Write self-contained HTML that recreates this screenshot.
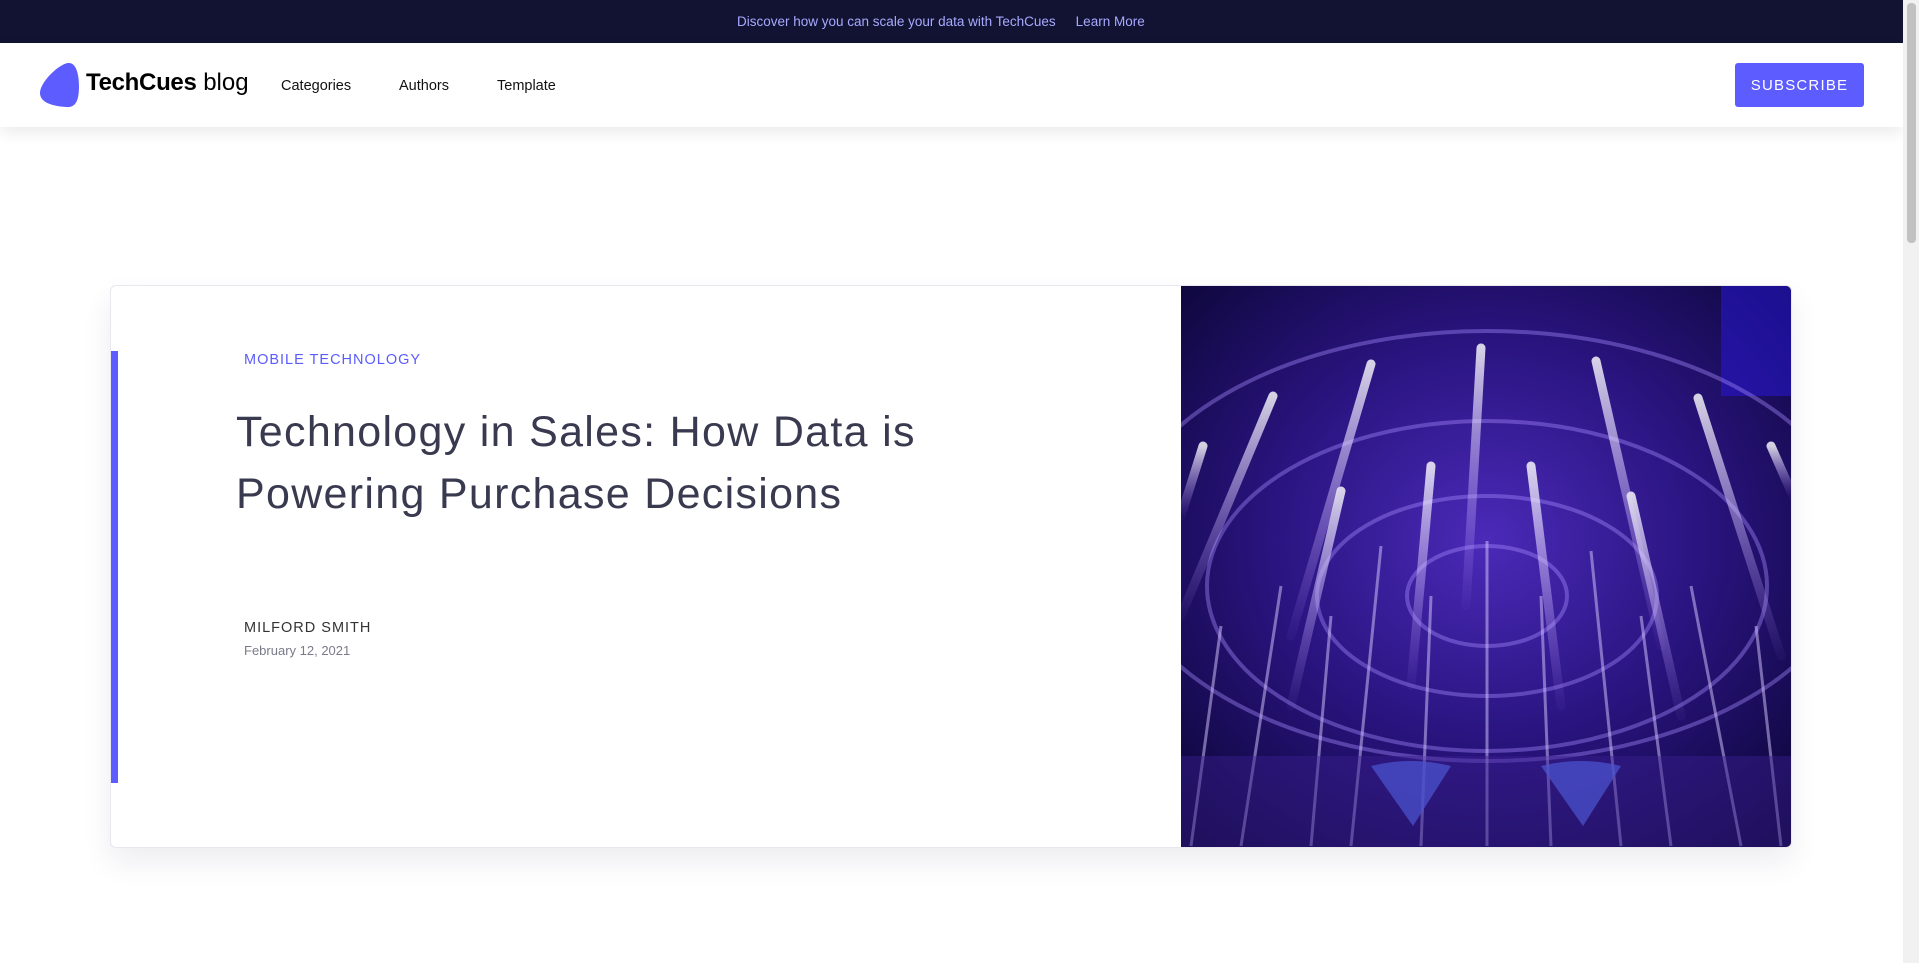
<!DOCTYPE html>
<html><head><meta charset="utf-8"><style>
*{margin:0;padding:0;box-sizing:border-box}
body{width:1919px;height:963px;overflow:hidden;background:#fff;font-family:"Liberation Sans",sans-serif;position:relative}
.top{height:43px;background:#121333;color:#a7a9ff;font-size:13.5px;line-height:43px;padding-left:737px}
.top span{margin-left:20px}
.nav{position:absolute;top:43px;left:0;width:1903px;height:84px;background:#fff;box-shadow:0 6px 14px rgba(0,0,0,.08)}
.logo{position:absolute;left:39px;top:19px}
.brand{position:absolute;left:86px;top:26px;font-size:24px;color:#000}
.brand b{letter-spacing:-.3px}
.nav a{position:absolute;top:35px;font-size:14.5px;color:#111;text-decoration:none}
.btn{position:absolute;left:1735px;top:20px;width:129px;height:44px;background:#5c5cff;color:#fff;border-radius:3px;font-size:15px;letter-spacing:1.2px;text-align:center;line-height:45px}
.scroll{position:absolute;right:0;top:0;width:16px;height:963px;background:#f1f1f1}
.scroll div{position:absolute;left:4px;top:3px;width:9px;height:240px;background:#c1c1c1;border-radius:4px}
.card{position:absolute;left:110px;top:285px;width:1682px;height:563px;border:1px solid #e8e8ee;border-radius:6px;box-shadow:0 14px 30px rgba(30,30,80,.08);background:#fff;overflow:hidden}
.bar{position:absolute;left:0;top:65px;width:7px;height:432px;background:#5c5cff}
.cat{position:absolute;left:133px;top:66px;font-size:14.5px;letter-spacing:1px;color:#5c5cff}
.title{position:absolute;left:125px;top:115px;font-size:43px;line-height:62px;color:#393a4f;font-weight:300;letter-spacing:1.3px}
.auth{position:absolute;left:133px;top:334px;font-size:14.5px;letter-spacing:1px;color:#333}
.date{position:absolute;left:133px;top:357px;font-size:13px;color:#7a7a8a}
.img{position:absolute;left:1070px;top:0;width:612px;height:563px}
</style></head><body>
<div class="top">Discover how you can scale your data with TechCues<span>Learn More</span></div>
<div class="nav">
<svg class="logo" width="42" height="46" viewBox="0 0 42 46"><path d="M29 1C37 0 40 12 40 24C40 38 37 46 27 45C12 44 1 40 1 31C1 20 20 2 29 1Z" fill="#5c5cff"/></svg>
<div class="brand"><b>TechCues</b> blog</div>
<a style="left:281px">Categories</a><a style="left:399px">Authors</a><a style="left:497px">Template</a>
<div class="btn">SUBSCRIBE</div>
</div>
<div class="scroll"><div></div></div>
<div class="card">
<div class="bar"></div>
<div class="cat">MOBILE TECHNOLOGY</div>
<div class="title">Technology in Sales: How Data is<br>Powering Purchase Decisions</div>
<div class="auth">MILFORD SMITH</div>
<div class="date">February 12, 2021</div>
<svg class="img" viewBox="0 0 612 563" preserveAspectRatio="none">
<defs>
<radialGradient id="g" cx="50%" cy="45%" r="70%"><stop offset="0" stop-color="#4a2ab8"/><stop offset=".5" stop-color="#2a1480"/><stop offset="1" stop-color="#0c0638"/></radialGradient>
<linearGradient id="b" x1="0" y1="0" x2="0" y2="1"><stop offset="0" stop-color="#fff" stop-opacity=".95"/><stop offset="1" stop-color="#b08cff" stop-opacity=".05"/></linearGradient>
</defs>
<rect width="612" height="563" fill="url(#g)"/>
<rect x="540" y="0" width="72" height="110" fill="#2a18e0" opacity=".5"/>
<g fill="none" stroke="#a88cff" stroke-opacity=".4" stroke-width="4">
<ellipse cx="306" cy="260" rx="370" ry="215"/>
<ellipse cx="306" cy="300" rx="280" ry="165"/>
<ellipse cx="306" cy="310" rx="170" ry="100"/>
<ellipse cx="306" cy="310" rx="80" ry="50"/>
</g>
<g stroke="url(#b)" stroke-width="9" stroke-linecap="round" opacity=".85">
<path d="M190 78L110 350"/><path d="M300 62L285 320"/><path d="M415 75L480 360"/><path d="M517 112L600 370"/><path d="M92 110L0 330"/><path d="M22 160L0 230"/><path d="M590 160L612 210"/>
<path d="M250 180L230 400"/><path d="M350 180L380 420"/><path d="M160 205L110 420"/><path d="M450 210L500 430"/>
</g>
<g stroke="#d8c8ff" stroke-width="3" opacity=".5">
<path d="M100 300L60 560"/><path d="M200 260L170 560"/><path d="M306 255L306 560"/><path d="M410 265L440 560"/><path d="M510 300L560 560"/><path d="M40 340L10 560"/><path d="M575 340L600 560"/>
<path d="M150 330L130 560"/><path d="M250 310L240 560"/><path d="M360 310L370 560"/><path d="M460 330L490 560"/>
</g>
<g fill="#5a7cff" opacity=".75"><path d="M190 480Q230 470 270 480L232 540Z"/><path d="M360 480Q400 470 440 480L402 540Z"/></g>
<rect y="470" width="612" height="93" fill="#3a2090" opacity=".45"/>
</svg>
</div>
</body></html>
